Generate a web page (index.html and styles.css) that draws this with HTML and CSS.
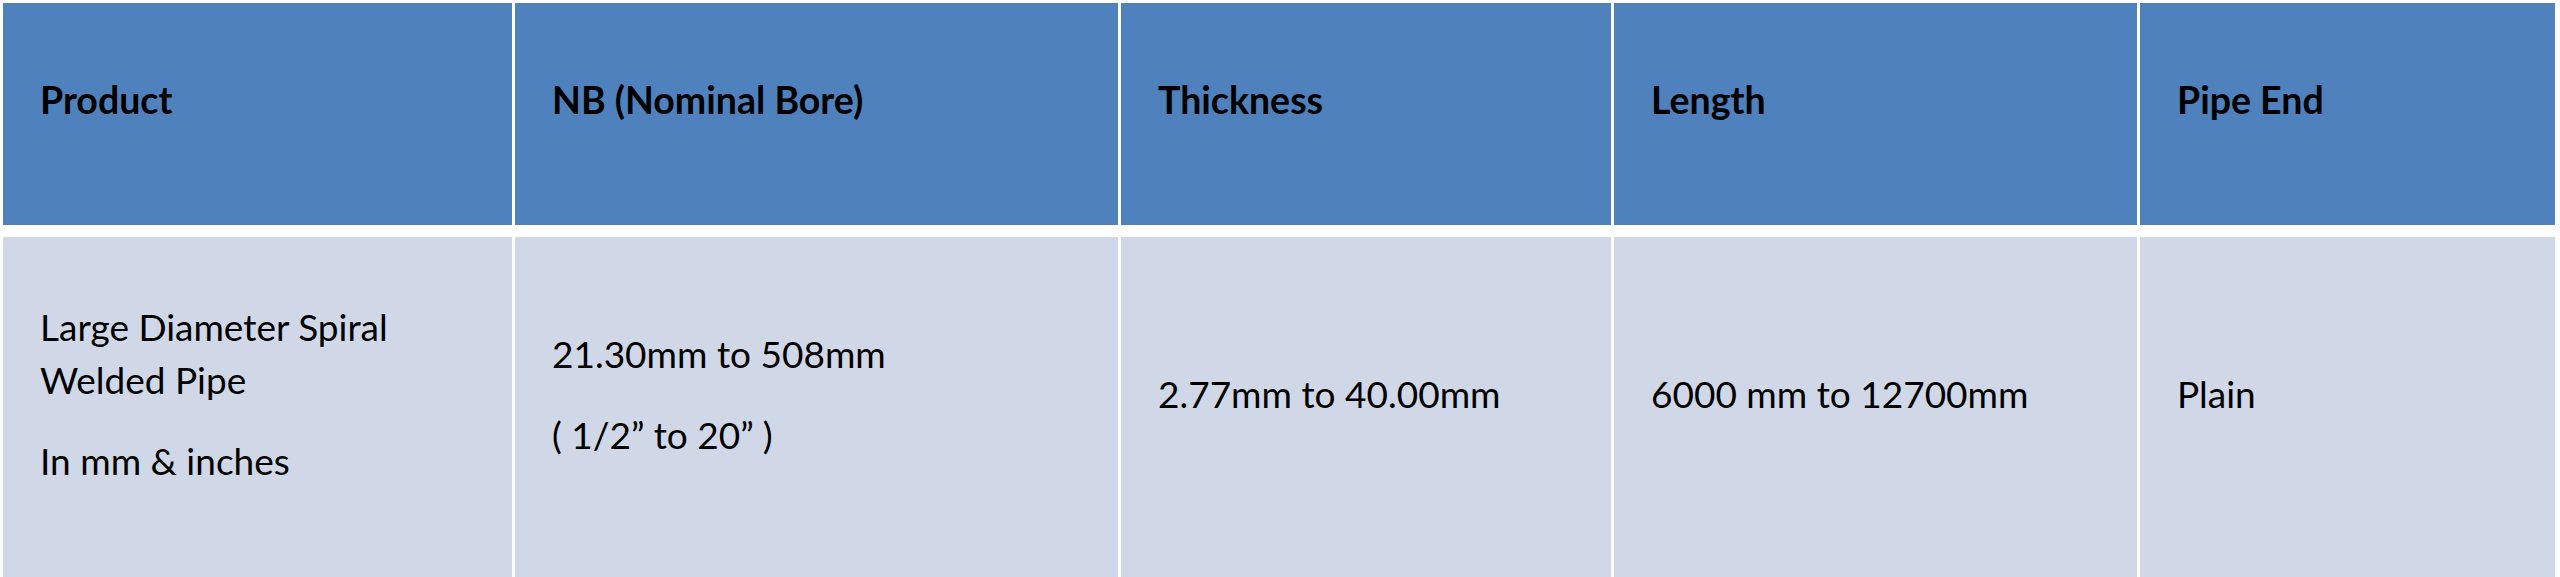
FILE: index.html
```html
<!DOCTYPE html>
<html lang="en">
<head>
<meta charset="utf-8">
<title>Pipe specification</title>
<link rel="stylesheet" href="styles.css">
</head>
<body>
<div class="spec-table">
  <div class="cell head">Product</div>
  <div class="cell head">NB (Nominal Bore)</div>
  <div class="cell head">Thickness</div>
  <div class="cell head">Length</div>
  <div class="cell head">Pipe End</div>

  <div class="cell body">
    <div class="block">
      <p>Large Diameter Spiral<br>Welded Pipe</p>
      <p>In mm &amp; inches</p>
    </div>
  </div>
  <div class="cell body">
    <div class="block">
      <p>21.30mm to 508mm</p>
      <p>( 1/2” to 20” )</p>
    </div>
  </div>
  <div class="cell body">
    <div class="block"><p>2.77mm to 40.00mm</p></div>
  </div>
  <div class="cell body">
    <div class="block"><p>6000 mm to 12700mm</p></div>
  </div>
  <div class="cell body">
    <div class="block"><p>Plain</p></div>
  </div>
</div>
</body>
</html>
```

FILE: styles.css
```css
html, body {
  margin: 0;
  padding: 0;
  background: #ffffff;
}

body {
  font-family: "Lato", "Open Sans", "Liberation Sans", sans-serif;
  color: #000000;
  overflow: hidden;
}

.spec-table {
  display: grid;
  grid-template-columns: 509px 603px 490px 523px 415px;
  grid-template-rows: 222px 345px;
  column-gap: 3px;
  row-gap: 12px;
  padding: 3px 0 0 3px;
}

.cell {
  display: flex;
  align-items: center;
  padding-left: 37px;
}

.head {
  background: #4f81bd;
  font-weight: 700;
  font-size: 37.5px;
  padding-bottom: 30px;
}

.body {
  background: #d0d8e8;
  font-size: 37px;
  padding-bottom: 32px;
}

.block p {
  margin: 0;
  line-height: 53px;
}

.block p + p {
  margin-top: 28px;
}
```
